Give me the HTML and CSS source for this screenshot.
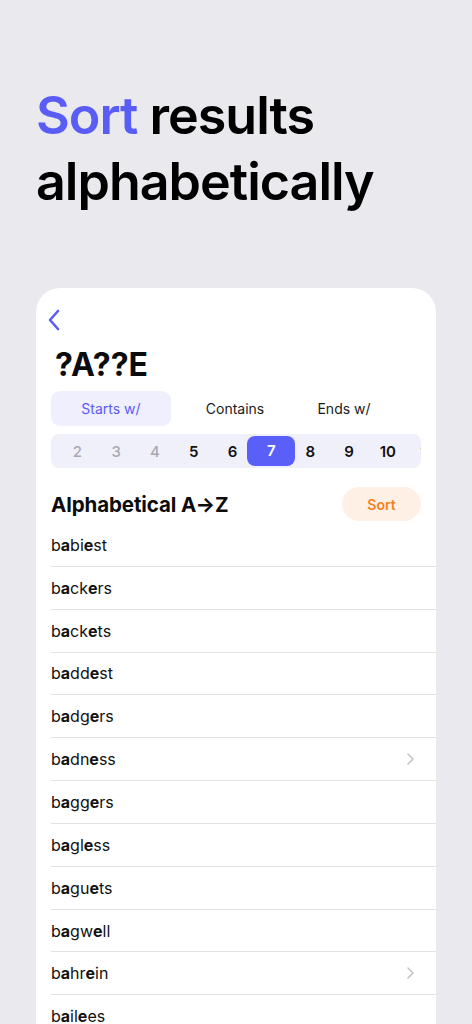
FILE: index.html
```html
<!DOCTYPE html>
<html lang="en">
<head>
<meta charset="utf-8">
<title>Sort results alphabetically</title>
<link rel="stylesheet" href="styles.css">
</head>
<body>
<h1 class="hero"><span class="accent">Sort</span> results<br>alphabetically</h1>
<div class="card">
  <div class="back">
    <svg width="14" height="22" viewBox="0 0 14 22"><path d="M11 2 L3 11 L11 20" fill="none" stroke="#5a5cf6" stroke-width="2.6" stroke-linecap="round" stroke-linejoin="round"/></svg>
  </div>
  <div class="title">?A??E</div>
  <div class="tabs">
    <div class="tab active">Starts w/</div>
    <div class="tab">Contains</div>
    <div class="tab">Ends w/</div>
  </div>
  <div class="numbers">
    <div class="num dim">2</div>
    <div class="num dim">3</div>
    <div class="num dim">4</div>
    <div class="num">5</div>
    <div class="num">6</div>
    <div class="num sel">7</div>
    <div class="num">8</div>
    <div class="num">9</div>
    <div class="num">10</div>
    <div class="num">11</div>
  </div>
  <div class="head">
    <div class="head-title">Alphabetical A→Z</div>
    <div class="sort">Sort</div>
  </div>
  <ul class="list">
    <li class="row"><span>b<b>a</b>bi<b>e</b>st</span></li>
    <li class="row"><span>b<b>a</b>ck<b>e</b>rs</span></li>
    <li class="row"><span>b<b>a</b>ck<b>e</b>ts</span></li>
    <li class="row"><span>b<b>a</b>dd<b>e</b>st</span></li>
    <li class="row"><span>b<b>a</b>dg<b>e</b>rs</span></li>
    <li class="row"><span>b<b>a</b>dn<b>e</b>ss</span><svg class="chev" width="9" height="14" viewBox="0 0 9 14"><path d="M2 2 L7 7 L2 12" fill="none" stroke="#c4c4c8" stroke-width="1.6" stroke-linecap="round" stroke-linejoin="round"/></svg></li>
    <li class="row"><span>b<b>a</b>gg<b>e</b>rs</span></li>
    <li class="row"><span>b<b>a</b>gl<b>e</b>ss</span></li>
    <li class="row"><span>b<b>a</b>gu<b>e</b>ts</span></li>
    <li class="row"><span>b<b>a</b>gw<b>e</b>ll</span></li>
    <li class="row"><span>b<b>a</b>hr<b>e</b>in</span><svg class="chev" width="9" height="14" viewBox="0 0 9 14"><path d="M2 2 L7 7 L2 12" fill="none" stroke="#c4c4c8" stroke-width="1.6" stroke-linecap="round" stroke-linejoin="round"/></svg></li>
    <li class="row"><span>b<b>a</b>il<b>e</b>es</span></li>
  </ul>
</div>
</body>
</html>
```

FILE: styles.css
```css
* { box-sizing: border-box; }
html, body { margin: 0; padding: 0; }
body {
  background: #e9e9ee;
  font-family: Inter, "Noto Sans", "Liberation Sans", sans-serif;
  color: #0c0c0e;
  width: 472px;
  height: 1024px;
  overflow: hidden;
}
.hero {
  margin: 83px 0 0 36px;
  font-size: 52px;
  line-height: 66px;
  font-weight: 600;
  letter-spacing: -1px;
  color: #000;
}
.accent { color: #5a5cf6; }
.card {
  margin: 73px 0 0 36px;
  width: 400px;
  background: #fff;
  border-radius: 24px 24px 0 0;
  padding: 21px 0 0 15px;
  height: 800px;
}
.back { height: 22px; margin-left: -4px; display: flex; }
.title {
  margin: 14px 0 0 4px;
  font-size: 32px;
  line-height: 40px;
  font-weight: 700;
}
.tabs {
  margin-top: 6px;
  display: grid;
  grid-template-columns: 120px 128px 90px;
  height: 35px;
}
.tab {
  display: flex;
  align-items: center;
  justify-content: center;
  font-size: 14px;
  color: #1a1a1c;
  border-radius: 9px;
}
.tab.active { background: #efeffd; color: #5a5cf6; }
.numbers {
  margin-top: 8px;
  width: 370px;
  height: 34px;
  background: #f0f0fb;
  border-radius: 8px;
  display: flex;
  align-items: center;
  padding-left: 7px;
  overflow: hidden;
}
.num {
  flex: 0 0 38.8px;
  text-align: center;
  font-size: 15px;
  font-weight: 600;
  color: #111;
}
.num.dim { color: #a9a9b0; font-weight: 500; }
.num.sel {
  flex: 0 0 48px;
  margin: 0 -4.6px;
  height: 30px;
  line-height: 30px;
  background: #5a5ff8;
  color: #fff;
  border-radius: 8px;
}
.head {
  margin-top: 19px;
  width: 370px;
  display: flex;
  align-items: center;
  justify-content: space-between;
}
.head-title {
  font-size: 20.5px;
  font-weight: 700;
  letter-spacing: -0.1px;
}
.sort {
  width: 79px;
  height: 34px;
  border-radius: 17px;
  background: #fff0e6;
  color: #f5801f;
  font-size: 14px;
  font-weight: 600;
  display: flex;
  align-items: center;
  justify-content: center;
}
.list {
  list-style: none;
  margin: 3px 0 0 0;
  padding: 0;
}
.row {
  height: 42.85px;
  border-bottom: 1px solid #e2e2e6;
  display: flex;
  align-items: center;
  justify-content: space-between;
  padding-right: 21px;
  font-size: 16px;
  color: #111;
}
.row b { font-weight: 700; }
.chev { display: block; }
```
